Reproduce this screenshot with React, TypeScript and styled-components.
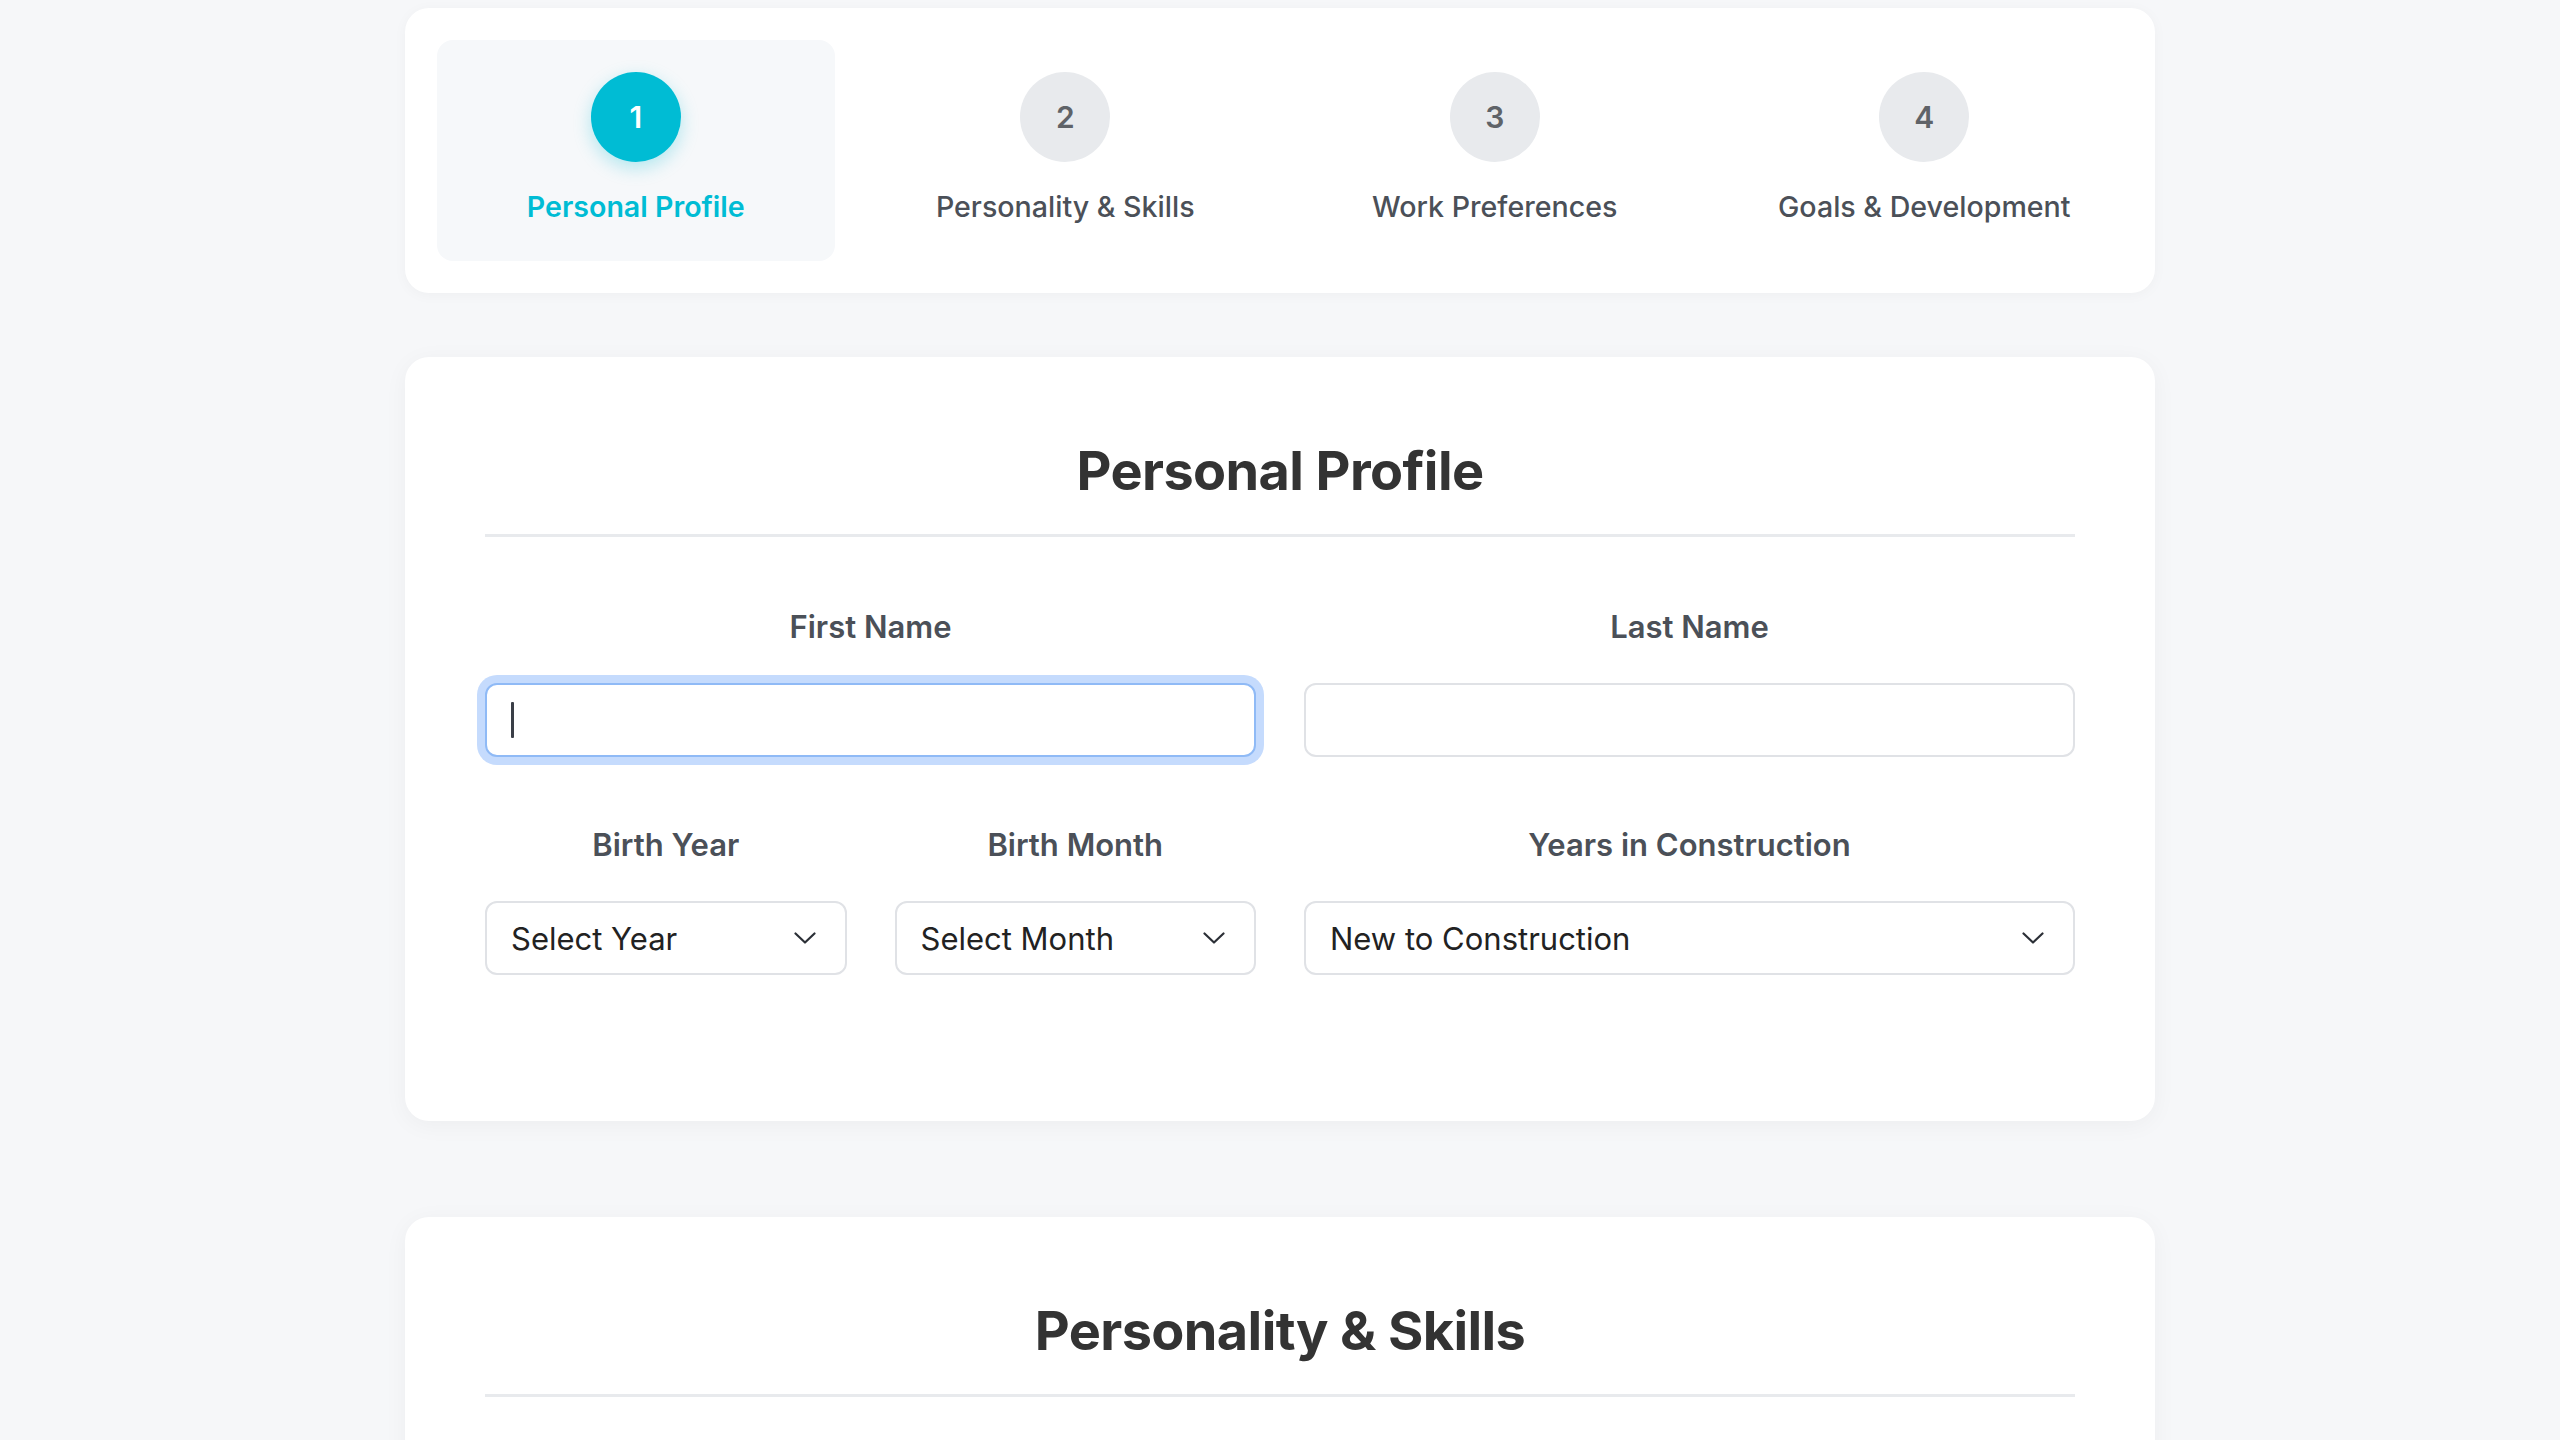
import React from 'react';
import styled, { createGlobalStyle } from 'styled-components';

const GlobalStyle = createGlobalStyle`
  html, body { margin: 0; padding: 0; background: #f6f7f9; }
  body {
    font-family: Inter, "Noto Sans", "Liberation Sans", sans-serif;
    color: #333;
    -webkit-font-smoothing: antialiased;
  }
  * { box-sizing: border-box; }
`;

const Page = styled.div`
  width: 1750px;
  margin: 0 auto;
  padding: 8px 0 96px;
`;

const StepsCard = styled.nav`
  background: #fff;
  border-radius: 24px;
  padding: 32px;
  box-shadow: 0 2px 14px rgba(0, 0, 0, 0.035);
  display: grid;
  grid-template-columns: repeat(4, 1fr);
  gap: 32px;
  margin-bottom: 64px;
`;

const Step = styled.div<{ $active?: boolean }>`
  display: flex;
  flex-direction: column;
  align-items: center;
  padding: 32px 16px 34px;
  border-radius: 16px;
  background: ${(p) => (p.$active ? '#f6f8fa' : 'transparent')};
`;

const StepCircle = styled.div<{ $active?: boolean }>`
  width: 90px;
  height: 90px;
  border-radius: 50%;
  display: flex;
  align-items: center;
  justify-content: center;
  font-size: 30px;
  font-weight: 600;
  background: ${(p) => (p.$active ? '#00bcd4' : '#e8eaed')};
  color: ${(p) => (p.$active ? '#fff' : '#5f6368')};
  box-shadow: ${(p) => (p.$active ? '0 6px 18px rgba(0, 188, 212, 0.28)' : 'none')};
  margin-bottom: 25px;
`;

const StepLabel = styled.div<{ $active?: boolean }>`
  font-size: 28.6px;
  line-height: 40px;
  font-weight: ${(p) => (p.$active ? 600 : 500)};
  color: ${(p) => (p.$active ? '#00bcd4' : '#4b5058')};
`;

const Section = styled.section`
  background: #fff;
  border-radius: 24px;
  padding: 80px 80px 81px;
  box-shadow: 0 4px 24px rgba(0, 0, 0, 0.045);
  margin-bottom: 96px;
`;

const SectionTitle = styled.h2`
  margin: 0 0 67px;
  padding-bottom: 30px;
  border-bottom: 3px solid #e8eaed;
  text-align: center;
  font-size: 54px;
  line-height: 67px;
  font-weight: 700;
  color: #333;
  letter-spacing: -0.6px;
`;

const Row = styled.div`
  display: grid;
  grid-template-columns: 1fr 1fr;
  gap: 48px;
  margin-bottom: 65px;
`;

const SubRow = styled.div`
  display: grid;
  grid-template-columns: 1fr 1fr;
  gap: 48px;
`;

const Field = styled.div`
  display: flex;
  flex-direction: column;
`;

const Label = styled.label`
  text-align: center;
  font-size: 31px;
  line-height: 46px;
  font-weight: 600;
  color: #4b5058;
  margin-bottom: 33px;
`;

const InputWrap = styled.div`
  position: relative;
`;

const TextInput = styled.input<{ $focused?: boolean }>`
  width: 100%;
  height: 74px;
  border: 2px solid ${(p) => (p.$focused ? '#8fbaf6' : '#e0e2e6')};
  border-radius: 12px;
  padding: 0 26px;
  font-family: inherit;
  font-size: 31px;
  color: #222;
  background: #fff;
  outline: none;
  caret-color: transparent;
  box-shadow: ${(p) => (p.$focused ? '0 0 0 8px #c5dbfd' : 'none')};
`;

const Caret = styled.span`
  position: absolute;
  left: 26px;
  top: 19px;
  width: 3px;
  height: 36px;
  border-radius: 1px;
  background: #3a3f47;
  pointer-events: none;
`;

const SelectBox = styled.select`
  width: 100%;
  height: 74px;
  border: 2px solid #e0e2e6;
  border-radius: 12px;
  padding: 0 70px 0 24px;
  font-family: inherit;
  font-size: 31px;
  color: #222;
  background: #fff;
  appearance: none;
  -webkit-appearance: none;
  outline: none;
`;

const Chevron = styled.svg`
  position: absolute;
  right: 31px;
  top: 31px;
  width: 22px;
  height: 12px;
  pointer-events: none;
`;

const ChevronIcon = () => (
  <Chevron viewBox="0 0 22 12" fill="none">
    <polyline points="1.5,1.5 11,10.5 20.5,1.5" stroke="#2b2f36" strokeWidth="2.2" strokeLinecap="round" strokeLinejoin="round" />
  </Chevron>
);

const Select = ({ options }: { options: string[] }) => (
  <InputWrap>
    <SelectBox defaultValue={options[0]}>
      {options.map((o) => (
        <option key={o}>{o}</option>
      ))}
    </SelectBox>
    <ChevronIcon />
  </InputWrap>
);

const steps = ['Personal Profile', 'Personality & Skills', 'Work Preferences', 'Goals & Development'];

const years = ['Select Year', ...Array.from({ length: 60 }, (_, i) => String(2007 - i))];
const months = ['Select Month', 'January', 'February', 'March', 'April', 'May', 'June', 'July', 'August', 'September', 'October', 'November', 'December'];
const experience = ['New to Construction', '1-2 Years', '3-5 Years', '6-10 Years', '10+ Years'];

export default function App() {
  return (
    <>
      <GlobalStyle />
      <Page>
        <StepsCard>
          {steps.map((s, i) => (
            <Step key={s} $active={i === 0}>
              <StepCircle $active={i === 0}>{i + 1}</StepCircle>
              <StepLabel $active={i === 0}>{s}</StepLabel>
            </Step>
          ))}
        </StepsCard>

        <Section>
          <SectionTitle>Personal Profile</SectionTitle>
          <Row>
            <Field>
              <Label>First Name</Label>
              <InputWrap>
                <TextInput $focused type="text" />
                <Caret />
              </InputWrap>
            </Field>
            <Field>
              <Label>Last Name</Label>
              <TextInput type="text" />
            </Field>
          </Row>
          <Row>
            <SubRow>
              <Field>
                <Label>Birth Year</Label>
                <Select options={years} />
              </Field>
              <Field>
                <Label>Birth Month</Label>
                <Select options={months} />
              </Field>
            </SubRow>
            <Field>
              <Label>Years in Construction</Label>
              <Select options={experience} />
            </Field>
          </Row>
        </Section>

        <Section>
          <SectionTitle>Personality &amp; Skills</SectionTitle>
        </Section>
      </Page>
    </>
  );
}
